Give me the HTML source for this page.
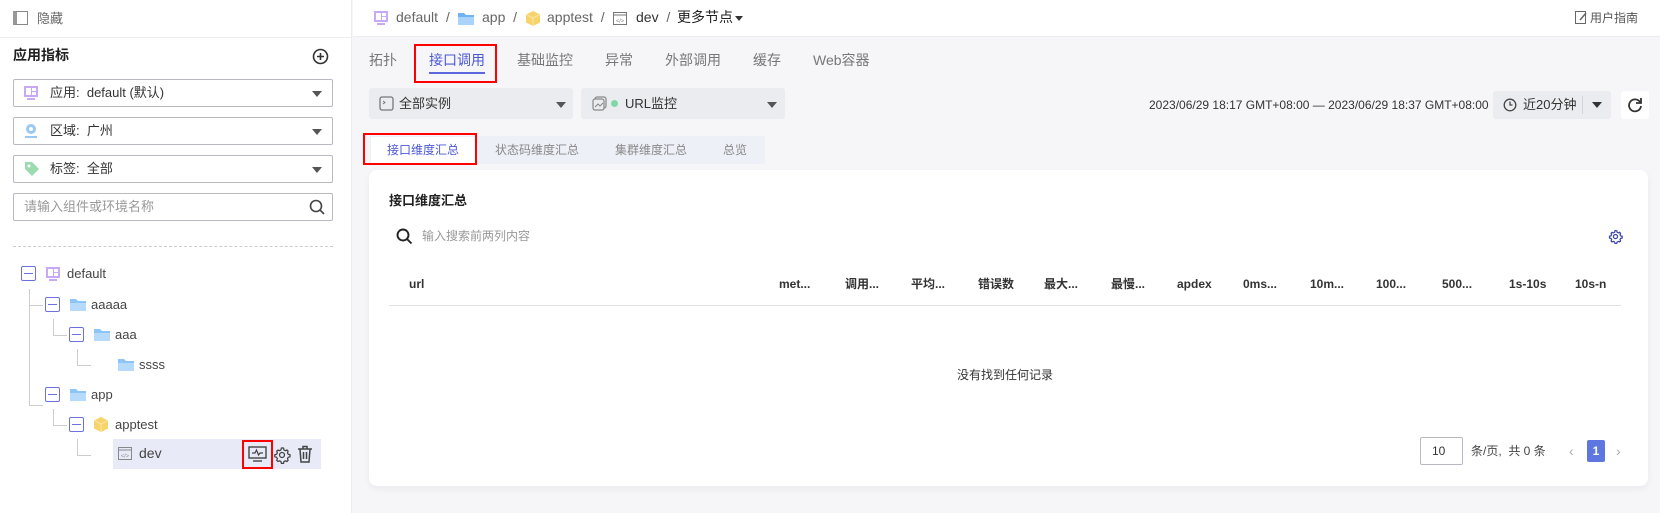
<!DOCTYPE html>
<html><head><meta charset="utf-8">
<style>
*{box-sizing:border-box;margin:0;padding:0}
body{width:1660px;height:513px;overflow:hidden;background:#f6f6f8;font-family:"Liberation Sans","Noto Sans CJK SC",sans-serif;font-size:13px;line-height:19px;color:#333;position:relative}
.abs{position:absolute}
#side{left:0;top:0;width:352px;height:513px;background:#fff;border-right:1px solid #ececf0}
.sel{position:absolute;left:13px;width:320px;height:28px;border:1px solid #b9b9c3;border-radius:2px;background:#fff}
.sel .t{position:absolute;left:36px;top:0;line-height:26px;font-size:13px;color:#333;white-space:nowrap}
.sel .ar{position:absolute;right:10px;top:11px;width:0;height:0;border-left:5px solid transparent;border-right:5px solid transparent;border-top:6px solid #555}
.box{position:absolute;width:15px;height:15px;border:1.5px solid #6b72e0;border-radius:2px;background:#fff}
.box:after{content:"";position:absolute;left:2px;right:2px;top:5.5px;height:1.5px;background:#6b72e0}
.tt{position:absolute;font-size:13px;color:#444}
.vl{position:absolute;border-left:1px solid #ccc}
.hl{position:absolute;border-top:1px solid #ccc}
.tab{position:absolute;top:51px;font-size:14px;color:#777}
.red{position:absolute;border:2.5px solid #f00}
.th{position:absolute;top:276px;font-size:12px;line-height:16px;font-weight:bold;color:#333;white-space:nowrap}
</style></head><body>
<div id="side" class="abs">
  <div class="abs" style="left:0;top:37px;width:352px;border-top:1px solid #ededf0"></div>
  <div class="abs" style="left:13px;top:11px;width:15px;height:14px;border:1px solid #888;border-left:4px solid #999;background:#fff"></div>
  <div class="abs" style="left:37px;top:9px;font-size:13px;color:#666">隐藏</div>
  <div class="abs" style="left:13px;top:46px;font-size:14px;font-weight:bold;color:#222">应用指标</div>
  <svg class="abs" style="left:312px;top:48px" width="17" height="17" viewBox="0 0 17 17"><circle cx="8.5" cy="8.5" r="7" fill="none" stroke="#333" stroke-width="1.6"/><path d="M8.5 5v7M5 8.5h7" stroke="#333" stroke-width="1.6"/></svg>
  <div class="sel" style="top:79px"><svg class="abs" style="left:10px;top:6px" width="14" height="14"><rect x="0" y="0" width="14" height="11" fill="#c8a9f5"/><rect x="2" y="2" width="5" height="7" fill="#fff"/><rect x="8" y="2" width="4" height="3" fill="#fff"/><rect x="8" y="6" width="4" height="3" fill="#fff"/><rect x="3" y="12" width="8" height="2" fill="#c8a9f5"/></svg><span class="t">应用:&nbsp;&nbsp;default (默认)</span><span class="ar"></span></div>
  <div class="sel" style="top:117px"><svg class="abs" style="left:10px;top:5px" width="14" height="16"><circle cx="7" cy="6" r="5" fill="#9cc8f5"/><circle cx="7" cy="6" r="2" fill="#fff"/><rect x="1" y="13" width="12" height="2" fill="#9cc8f5"/></svg><span class="t">区域:&nbsp;&nbsp;广州</span><span class="ar"></span></div>
  <div class="sel" style="top:155px"><svg class="abs" style="left:10px;top:5px" width="16" height="16"><path d="M1 1h7l7 7-7 7-7-7z" fill="#9bdcae"/><circle cx="5" cy="5" r="1.5" fill="#fff"/></svg><span class="t">标签:&nbsp;&nbsp;全部</span><span class="ar"></span></div>
  <div class="sel" style="top:193px"><span class="t" style="left:10px;color:#999">请输入组件或环境名称</span><svg class="abs" style="left:295px;top:5px" width="16" height="16"><circle cx="7" cy="7" r="5.5" fill="none" stroke="#444" stroke-width="1.6"/><path d="M11 11l4 4" stroke="#444" stroke-width="1.6"/></svg></div>
  <div class="abs" style="left:13px;top:246px;width:320px;border-top:1px dashed #ccc"></div>

  <div class="vl" style="left:29px;top:289px;height:116px"></div>
  <div class="hl" style="left:29px;top:305px;width:14px"></div>
  <div class="hl" style="left:29px;top:405px;width:14px"></div>
  <div class="vl" style="left:53px;top:319px;height:16px"></div><div class="hl" style="left:53px;top:335px;width:14px"></div>
  <div class="vl" style="left:77px;top:349px;height:16px"></div><div class="hl" style="left:77px;top:365px;width:14px"></div>
  <div class="vl" style="left:53px;top:409px;height:16px"></div><div class="hl" style="left:53px;top:425px;width:14px"></div>
  <div class="vl" style="left:77px;top:439px;height:16px"></div><div class="hl" style="left:77px;top:455px;width:14px"></div>

  <div class="box" style="left:21px;top:266px"></div>
  <svg class="abs" style="left:46px;top:267px" width="14" height="14"><rect x="0" y="0" width="14" height="11" fill="#c8a9f5"/><rect x="2" y="2" width="5" height="7" fill="#fff"/><rect x="8" y="2" width="4" height="3" fill="#fff"/><rect x="8" y="6" width="4" height="3" fill="#fff"/><rect x="3" y="12" width="8" height="2" fill="#c8a9f5"/></svg>
  <div class="tt" style="left:67px;top:264px">default</div>

  <div class="box" style="left:45px;top:297px"></div>
  <svg class="abs" style="left:70px;top:298px" width="16" height="13"><path d="M0 1h6l2 2h8v10H0z" fill="#8ec5f7"/><rect x="0" y="5" width="16" height="8" fill="#b6dafb"/></svg>
  <div class="tt" style="left:91px;top:295px">aaaaa</div>

  <div class="box" style="left:69px;top:327px"></div>
  <svg class="abs" style="left:94px;top:328px" width="16" height="13"><path d="M0 1h6l2 2h8v10H0z" fill="#8ec5f7"/><rect x="0" y="5" width="16" height="8" fill="#b6dafb"/></svg>
  <div class="tt" style="left:115px;top:325px">aaa</div>

  <svg class="abs" style="left:118px;top:358px" width="16" height="13"><path d="M0 1h6l2 2h8v10H0z" fill="#8ec5f7"/><rect x="0" y="5" width="16" height="8" fill="#b6dafb"/></svg>
  <div class="tt" style="left:139px;top:355px">ssss</div>

  <div class="box" style="left:45px;top:387px"></div>
  <svg class="abs" style="left:70px;top:388px" width="16" height="13"><path d="M0 1h6l2 2h8v10H0z" fill="#8ec5f7"/><rect x="0" y="5" width="16" height="8" fill="#b6dafb"/></svg>
  <div class="tt" style="left:91px;top:385px">app</div>

  <div class="box" style="left:69px;top:417px"></div>
  <svg class="abs" style="left:94px;top:417px" width="14" height="15"><path d="M7 0l7 3.5v8L7 15 0 11.5v-8z" fill="#f7d36b"/><path d="M7 7v8M0 3.5L7 7l7-3.5" stroke="#fbe7a8" fill="none"/></svg>
  <div class="tt" style="left:115px;top:415px">apptest</div>

  <div class="abs" style="left:113px;top:439px;width:208px;height:30px;background:#e8ebf7"></div>
  <svg class="abs" style="left:118px;top:447px" width="14" height="13"><rect x="0.5" y="0.5" width="13" height="12" fill="none" stroke="#888"/><path d="M0.5 3h13" stroke="#888"/><text x="7" y="10.5" font-size="5.5" text-anchor="middle" fill="#888" font-family="Liberation Sans">&lt;/&gt;</text></svg>
  <div class="tt" style="left:139px;top:444px;font-size:14px">dev</div>
  <div class="red" style="left:242px;top:440px;width:31px;height:29px"></div>
  <svg class="abs" style="left:248px;top:446px" width="19" height="17"><rect x="1" y="1" width="17" height="11" fill="none" stroke="#444" stroke-width="1.4"/><path d="M4 7h3l1.5-3 2 5 1.5-2h3" fill="none" stroke="#444" stroke-width="1.2"/><path d="M5 15h9" stroke="#444" stroke-width="1.4"/></svg>
  <svg class="abs" style="left:273px;top:446px" width="18" height="18" viewBox="0 0 24 24"><path d="M12 2.5l2 .3.6 2.4 1.8 1 2.3-.8 1.4 1.5-.8 2.3 1 1.8 2.4.6v2.8l-2.4.6-1 1.8.8 2.3-1.4 1.5-2.3-.8-1.8 1-.6 2.4h-2.8l-.6-2.4-1.8-1-2.3.8-1.5-1.5.8-2.3-1-1.8-2.4-.6v-2.8l2.4-.6 1-1.8-.8-2.3 1.5-1.5 2.3.8 1.8-1 .6-2.4z" fill="none" stroke="#444" stroke-width="1.7"/><circle cx="12" cy="12" r="3.3" fill="none" stroke="#444" stroke-width="1.7"/></svg>
  <svg class="abs" style="left:297px;top:445px" width="16" height="18"><path d="M1 4h14M6 4V1.5h4V4M3 4l1 13h8l1-13M6.5 7v7M9.5 7v7" fill="none" stroke="#444" stroke-width="1.5"/></svg>
</div>

<!-- header -->
<div class="abs" style="left:353px;top:0;width:1307px;height:37px;background:#fff;border-bottom:1px solid #ededf0"></div>
<svg class="abs" style="left:374px;top:11px" width="14" height="14"><rect x="0" y="0" width="14" height="11" fill="#c8a9f5"/><rect x="2" y="2" width="5" height="7" fill="#fff"/><rect x="8" y="2" width="4" height="3" fill="#fff"/><rect x="8" y="6" width="4" height="3" fill="#fff"/><rect x="3" y="12" width="8" height="2" fill="#c8a9f5"/></svg>
<div class="abs" style="left:396px;top:8px;font-size:14px;color:#666">default&nbsp;&nbsp;/</div>
<svg class="abs" style="left:458px;top:12px" width="16" height="13"><path d="M0 1h6l2 2h8v10H0z" fill="#6fb3f2"/><rect x="0" y="5" width="16" height="8" fill="#a9d3fa"/></svg>
<div class="abs" style="left:482px;top:8px;font-size:14px;color:#666">app&nbsp;&nbsp;/</div>
<svg class="abs" style="left:526px;top:11px" width="14" height="15"><path d="M7 0l7 3.5v8L7 15 0 11.5v-8z" fill="#f7d36b"/><path d="M7 7v8M0 3.5L7 7l7-3.5" stroke="#fbe7a8" fill="none"/></svg>
<div class="abs" style="left:547px;top:8px;font-size:14px;color:#666">apptest&nbsp;&nbsp;/</div>
<svg class="abs" style="left:613px;top:12px" width="14" height="13"><rect x="0.5" y="0.5" width="13" height="12" fill="none" stroke="#777"/><path d="M0.5 3h13" stroke="#777"/><text x="7" y="10.5" font-size="5.5" text-anchor="middle" fill="#777" font-family="Liberation Sans">&lt;/&gt;</text></svg>
<div class="abs" style="left:636px;top:8px;font-size:14px;color:#333">dev&nbsp;&nbsp;<span style="color:#666">/</span></div>
<div class="abs" style="left:677px;top:8px;font-size:14px;color:#222">更多节点</div>
<div class="abs" style="left:735px;top:16px;border-left:4px solid transparent;border-right:4px solid transparent;border-top:5px solid #333"></div>
<svg class="abs" style="left:1575px;top:11px" width="13" height="13"><rect x="0.5" y="0.5" width="10" height="12" fill="none" stroke="#666"/><path d="M5 9l6-7" stroke="#666" stroke-width="1.5"/></svg>
<div class="abs" style="left:1590px;top:9px;font-size:12px;color:#555">用户指南</div>

<!-- tabs -->
<div class="tab" style="left:369px">拓扑</div>
<div class="tab" style="left:429px;color:#4a57d9">接口调用</div>
<div class="abs" style="left:429px;top:72px;width:56px;height:2px;background:#5b66e0"></div>
<div class="red" style="left:414px;top:44px;width:83px;height:39px"></div>
<div class="tab" style="left:517px">基础监控</div>
<div class="tab" style="left:605px">异常</div>
<div class="tab" style="left:665px">外部调用</div>
<div class="tab" style="left:753px">缓存</div>
<div class="tab" style="left:813px">Web容器</div>

<div class="abs" style="left:369px;top:88px;width:204px;height:31px;background:#ebecf0;border-radius:3px"></div>
<svg class="abs" style="left:379px;top:96px" width="15" height="15"><rect x="1" y="1" width="13" height="13" rx="2" fill="none" stroke="#777" stroke-width="1.3"/><path d="M4 5l2 1.5L4 8" fill="none" stroke="#777"/></svg>
<div class="abs" style="left:399px;top:88px;line-height:31px;font-size:13px;color:#333">全部实例</div>
<div class="abs" style="left:556px;top:102px;border-left:5px solid transparent;border-right:5px solid transparent;border-top:6px solid #555"></div>
<div class="abs" style="left:581px;top:88px;width:204px;height:31px;background:#ebecf0;border-radius:3px"></div>
<svg class="abs" style="left:592px;top:96px" width="15" height="15"><rect x="3" y="1" width="11" height="11" rx="2" fill="none" stroke="#888" stroke-width="1.2"/><rect x="1" y="3" width="11" height="11" rx="2" fill="#ebecf0" stroke="#888" stroke-width="1.2"/><path d="M3 11l3-3 2 2 3-3" fill="none" stroke="#888"/></svg>
<div class="abs" style="left:611px;top:100px;width:7px;height:7px;border-radius:50%;background:#7ed8a8"></div>
<div class="abs" style="left:625px;top:88px;line-height:31px;font-size:13px;color:#333">URL监控</div>
<div class="abs" style="left:767px;top:102px;border-left:5px solid transparent;border-right:5px solid transparent;border-top:6px solid #555"></div>

<div class="abs" style="left:1149px;top:91px;line-height:28px;font-size:12px;color:#333;white-space:nowrap">2023/06/29 18:17 GMT+08:00 — 2023/06/29 18:37 GMT+08:00</div>
<div class="abs" style="left:1493px;top:91px;width:118px;height:28px;background:#ebecf0;border-radius:3px"></div>
<svg class="abs" style="left:1503px;top:98px" width="14" height="14"><circle cx="7" cy="7" r="5.8" fill="none" stroke="#444" stroke-width="1.3"/><path d="M7 3.5V7h2.5" fill="none" stroke="#444" stroke-width="1.3"/></svg>
<div class="abs" style="left:1523px;top:91px;line-height:28px;font-size:13px;color:#333">近20分钟</div>
<div class="abs" style="left:1582px;top:96px;height:18px;border-left:1px solid #d5d5db"></div>
<div class="abs" style="left:1592px;top:102px;border-left:5px solid transparent;border-right:5px solid transparent;border-top:6px solid #333"></div>
<div class="abs" style="left:1621px;top:91px;width:28px;height:28px;background:#fff;border-radius:3px"></div>
<svg class="abs" style="left:1627px;top:97px" width="16" height="16"><path d="M13 5A6 6 0 1 0 14 9" fill="none" stroke="#333" stroke-width="1.8"/><path d="M14 1v5h-5" fill="none" stroke="#333" stroke-width="1.8"/></svg>

<!-- subtabs -->
<div class="abs" style="left:370px;top:136px;width:395px;height:28px;background:#eef0f8"></div>
<div class="abs" style="left:371px;top:137px;width:104px;height:26px;background:#fff"></div>
<div class="abs" style="left:387px;top:136px;line-height:28px;font-size:12px;color:#4a57d9">接口维度汇总</div>
<div class="abs" style="left:495px;top:136px;line-height:28px;font-size:12px;color:#888">状态码维度汇总</div>
<div class="abs" style="left:615px;top:136px;line-height:28px;font-size:12px;color:#888">集群维度汇总</div>
<div class="abs" style="left:723px;top:136px;line-height:28px;font-size:12px;color:#888">总览</div>
<div class="red" style="left:363px;top:133px;width:114px;height:32px"></div>

<!-- card -->
<div class="abs" style="left:369px;top:170px;width:1279px;height:316px;background:#fff;border-radius:8px;box-shadow:0 3px 8px rgba(0,0,0,0.05)"></div>
<div class="abs" style="left:389px;top:191px;font-size:13px;font-weight:bold;color:#222">接口维度汇总</div>
<svg class="abs" style="left:396px;top:228px" width="17" height="17"><circle cx="7" cy="7" r="5.5" fill="none" stroke="#222" stroke-width="1.9"/><path d="M11 11l4.5 4.5" stroke="#222" stroke-width="1.9"/></svg>
<div class="abs" style="left:422px;top:227px;font-size:12px;color:#999">输入搜索前两列内容</div>
<svg class="abs" style="left:1608px;top:229px" width="15" height="15" viewBox="0 0 24 24"><path d="M12 2.5l2 .3.6 2.4 1.8 1 2.3-.8 1.4 1.5-.8 2.3 1 1.8 2.4.6v2.8l-2.4.6-1 1.8.8 2.3-1.4 1.5-2.3-.8-1.8 1-.6 2.4h-2.8l-.6-2.4-1.8-1-2.3.8-1.5-1.5.8-2.3-1-1.8-2.4-.6v-2.8l2.4-.6 1-1.8-.8-2.3 1.5-1.5 2.3.8 1.8-1 .6-2.4z" fill="none" stroke="#3c46a8" stroke-width="2"/><circle cx="12" cy="12" r="3.3" fill="none" stroke="#3c46a8" stroke-width="2"/></svg>
<div class="th" style="left:409px">url</div>
<div class="th" style="left:779px">met...</div>
<div class="th" style="left:845px">调用...</div>
<div class="th" style="left:911px">平均...</div>
<div class="th" style="left:978px">错误数</div>
<div class="th" style="left:1044px">最大...</div>
<div class="th" style="left:1111px">最慢...</div>
<div class="th" style="left:1177px">apdex</div>
<div class="th" style="left:1243px">0ms...</div>
<div class="th" style="left:1310px">10m...</div>
<div class="th" style="left:1376px">100...</div>
<div class="th" style="left:1442px">500...</div>
<div class="th" style="left:1509px">1s-10s</div>
<div class="th" style="left:1575px">10s-n</div>
<div class="abs" style="left:389px;top:305px;width:1232px;border-top:1px solid #e2e2e6"></div>
<div class="abs" style="left:957px;top:366px;font-size:12px;color:#333">没有找到任何记录</div>
<div class="abs" style="left:1420px;top:437px;width:43px;height:28px;border:1px solid #b9b9c3;border-radius:2px"></div>
<div class="abs" style="left:1432px;top:437px;line-height:28px;font-size:12px;color:#333">10</div>
<div class="abs" style="left:1471px;top:437px;line-height:28px;font-size:12px;color:#444">条/页,&nbsp; 共 0 条</div>
<div class="abs" style="left:1569px;top:437px;line-height:28px;font-size:14px;color:#aaa">‹</div>
<div class="abs" style="left:1587px;top:440px;width:18px;height:22px;background:#5e76e0;border-radius:2px;color:#fff;font-size:12px;font-weight:bold;text-align:center;line-height:22px">1</div>
<div class="abs" style="left:1616px;top:437px;line-height:28px;font-size:14px;color:#aaa">›</div>
</body></html>
